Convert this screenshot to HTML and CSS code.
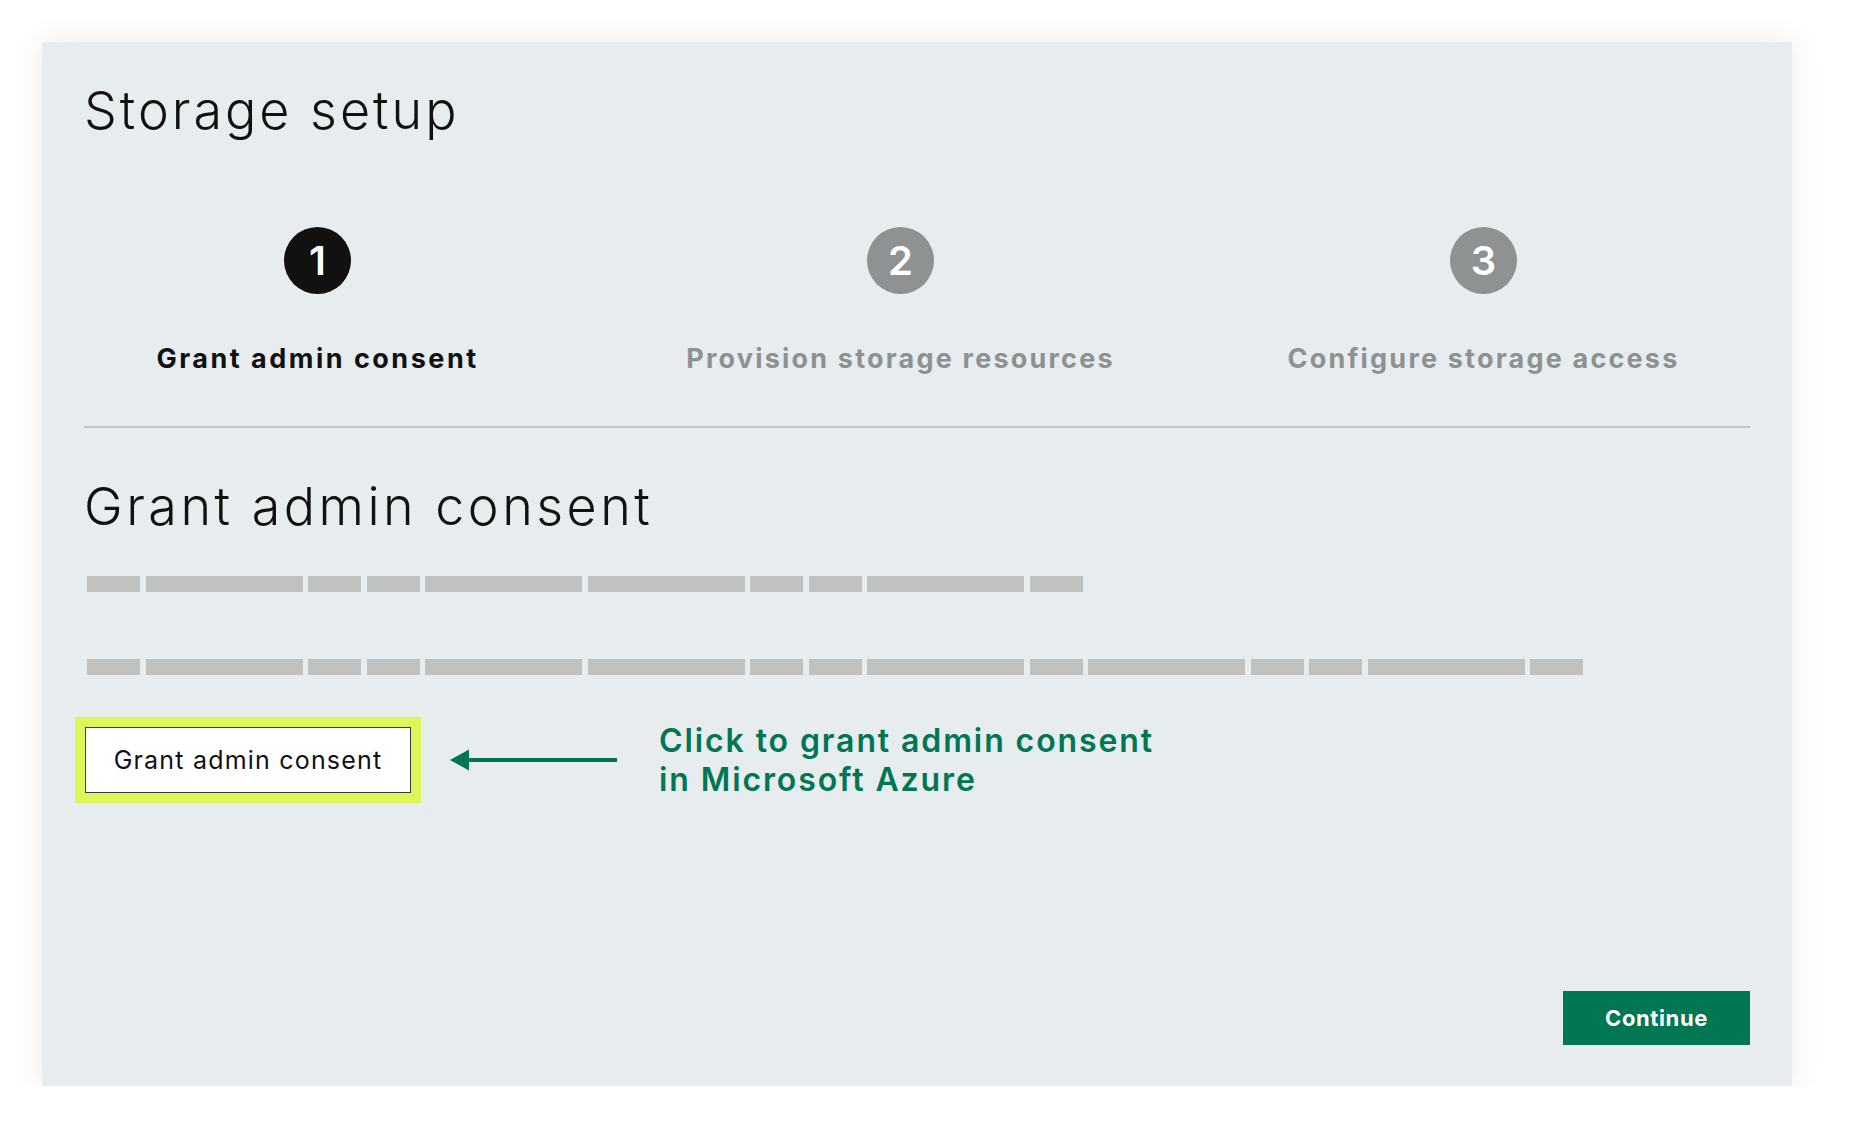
FILE: index.html
```html
<!DOCTYPE html>
<html lang="en">
<head>
<meta charset="utf-8">
<title>Storage setup</title>
<link rel="stylesheet" href="styles.css">
</head>
<body>
<main class="panel">
  <h1 class="title">Storage setup</h1>

  <ol class="steps">
    <li class="step step--active">
      <span class="step__num">1</span>
      <span class="step__label">Grant admin consent</span>
    </li>
    <li class="step">
      <span class="step__num">2</span>
      <span class="step__label">Provision storage resources</span>
    </li>
    <li class="step">
      <span class="step__num">3</span>
      <span class="step__label">Configure storage access</span>
    </li>
  </ol>

  <hr class="divider">

  <h2 class="heading">Grant admin consent</h2>

  <div class="placeholder">
    <span class="bar s"></span><span class="bar l"></span><span class="bar s"></span><span class="bar s"></span><span class="bar l"></span><span class="bar l"></span><span class="bar s"></span><span class="bar s"></span><span class="bar l"></span><span class="bar s"></span>
  </div>
  <div class="placeholder placeholder--second">
    <span class="bar s"></span><span class="bar l"></span><span class="bar s"></span><span class="bar s"></span><span class="bar l"></span><span class="bar l"></span><span class="bar s"></span><span class="bar s"></span><span class="bar l"></span><span class="bar s"></span><span class="bar l"></span><span class="bar s"></span><span class="bar s"></span><span class="bar l"></span><span class="bar s"></span>
  </div>

  <div class="action">
    <button class="consent-btn" type="button">Grant admin consent</button>
    <svg class="arrow" width="167" height="22" viewBox="0 0 167 22" aria-hidden="true">
      <polygon points="0,11 19,0.5 19,21.5" fill="#007652"/>
      <rect x="17" y="9" width="150" height="4" fill="#007652"/>
    </svg>
    <p class="note">Click to grant admin consent<br>in Microsoft Azure</p>
  </div>

  <div class="footer">
    <button class="continue-btn" type="button">Continue</button>
  </div>
</main>
</body>
</html>
```

FILE: styles.css
```css
* { box-sizing: border-box; }

html, body {
  margin: 0;
  padding: 0;
  background: #ffffff;
}

body {
  font-family: Inter, "Open Sans", "DejaVu Sans", sans-serif;
  color: #111111;
  padding: 42px 0 0 42px;
}

.panel {
  width: 1750px;
  height: 1044px;
  background: #e7ecef;
  box-shadow: 0 0 28px rgba(40, 50, 60, 0.10);
  padding: 39px 42px 41px 42px;
  display: flex;
  flex-direction: column;
}

.title {
  margin: 0;
  font-size: 52px;
  line-height: 60px;
  font-weight: 300;
  letter-spacing: 3px;
  color: #111111;
}

.steps {
  list-style: none;
  margin: 86px 0 0 0;
  padding: 0;
  display: grid;
  grid-template-columns: repeat(3, 467px);
  column-gap: 116px;
}

.step {
  display: flex;
  flex-direction: column;
  align-items: center;
}

.step__num {
  width: 67px;
  height: 67px;
  border-radius: 50%;
  background: #8f9292;
  color: #ffffff;
  font-size: 40px;
  font-weight: 600;
  line-height: 67px;
  text-align: center;
}

.step__label {
  margin-top: 49px;
  font-size: 27px;
  line-height: 32px;
  font-weight: 700;
  letter-spacing: 2.2px;
  color: #8e9191;
  white-space: nowrap;
}

.step--active .step__num { background: #111111; }
.step--active .step__label { color: #111111; letter-spacing: 2.5px; }

.divider {
  margin: 51px 0 0 0;
  border: 0;
  height: 2px;
  background: #c1c3c4;
}

.heading {
  margin: 49px 0 0 0;
  font-size: 52px;
  line-height: 60px;
  font-weight: 300;
  letter-spacing: 3.5px;
  color: #111111;
}

.placeholder {
  margin-top: 39px;
  margin-left: 3px;
  display: flex;
  gap: 5.5px;
  height: 16px;
}

.placeholder--second { margin-top: 67px; }

.bar {
  display: block;
  height: 16px;
  background: #c0c1c1;
}
.bar.s { width: 53px; }
.bar.l { width: 157px; }

.action {
  margin-top: 46px;
  display: flex;
  align-items: center;
}

.consent-btn {
  margin-left: 1px;
  width: 326px;
  height: 66px;
  background: #ffffff;
  border: 1.5px solid #3a3a3a;
  outline: 10px solid #dcf75a;
  font-family: inherit;
  font-size: 25px;
  font-weight: 400;
  letter-spacing: 1.2px;
  color: #111111;
  padding: 0;
}

.arrow {
  margin-left: 39px;
  flex: none;
}

.note {
  margin: 0 0 0 42px;
  font-size: 32px;
  line-height: 39px;
  font-weight: 600;
  letter-spacing: 1.9px;
  color: #007652;
}

.footer {
  margin-top: auto;
  display: flex;
  justify-content: flex-end;
}

.continue-btn {
  width: 187px;
  height: 54px;
  border: 0;
  background: #007652;
  color: #ffffff;
  font-family: inherit;
  font-size: 22px;
  font-weight: 700;
  letter-spacing: 0.6px;
  padding: 0;
}
```
